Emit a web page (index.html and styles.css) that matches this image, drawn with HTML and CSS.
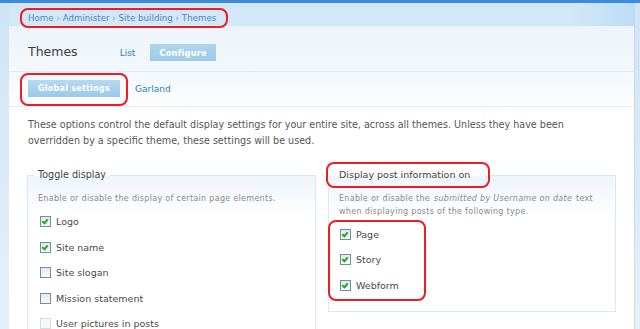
FILE: index.html
```html
<!DOCTYPE html>
<html lang="en">
<head>
    <meta charset="UTF-8">
    <title>Themes</title>
    <link rel="stylesheet" href="styles.css">
</head>
<body>
    <div class="page">
        <!-- breadcrumb -->
        <div class="crumb-bar">
            <div class="mark crumb-mark">
                <a href="#">Home</a> &rsaquo; <a href="#">Administer</a> &rsaquo; <a href="#">Site building</a> &rsaquo; <a href="#">Themes</a>
            </div>
        </div>

        <!-- title + primary tabs -->
        <div class="head">
            <h2>Themes</h2>
            <a class="tab" href="#">List</a>
            <a class="tab active" href="#">Configure</a>
        </div>

        <!-- secondary tabs -->
        <div class="subtabs">
            <div class="mark sub-mark">
                <a class="subtab active" href="#">Global settings</a>
            </div>
            <a class="subtab" href="#">Garland</a>
        </div>

        <div class="content">
            <p class="intro">These options control the default display settings for your entire site, across all themes. Unless they have been overridden by a specific theme, these settings will be used.</p>

            <div class="columns">
                <fieldset class="box">
                    <legend>Toggle display</legend>
                    <p class="desc">Enable or disable the display of certain page elements.</p>
                    <label class="check"><span class="cb on"></span>Logo</label>
                    <label class="check"><span class="cb on"></span>Site name</label>
                    <label class="check"><span class="cb"></span>Site slogan</label>
                    <label class="check"><span class="cb"></span>Mission statement</label>
                    <label class="check"><span class="cb off"></span>User pictures in posts</label>
                </fieldset>

                <fieldset class="box box-right">
                    <legend class="legend-mark">Display post information on</legend>
                    <p class="desc">Enable or disable the <em>submitted by Username on date</em> text when displaying posts of the following type.</p>
                    <div class="mark list-mark">
                        <label class="check"><span class="cb on"></span>Page</label>
                        <label class="check"><span class="cb on"></span>Story</label>
                        <label class="check"><span class="cb on"></span>Webform</label>
                    </div>
                </fieldset>
            </div>
        </div>
    </div>
</body>
</html>
```
FILE: styles.css
```css
/* page frame */
body {
    margin: 0;
    font-family: "DejaVu Sans", Verdana, sans-serif;
    background: linear-gradient(#3d8bdc 0, #3d8bdc 3px, #d0e4f5 3px, #e6f0f9 100%);
    height: 329px;
    overflow: hidden;
}

.page {
    margin: 3px 5px 0 9px;
    height: 326px;
    overflow: hidden;
    background: linear-gradient(#eef4fa 30px, #f6f9fc 80px, #ffffff 110px);
    border-right: 1px solid #c4dbef;
}

a {
    color: #2a7ac0;
    text-decoration: none;
}

/* red annotation boxes */
.mark {
    border: 2px solid #ee1c25;
    border-radius: 8px;
}

/* breadcrumb */
.crumb-bar {
    height: 24px;
    background: linear-gradient(90deg, #d2e7f7 90%, #bcdcf4 100%);
    border-bottom: 1px solid #e9f2fa;
    padding: 3px 0 0 11px;
    box-sizing: border-box;
}
.crumb-mark {
    display: inline-block;
    padding: 2px 10px 2px 6px;
    font-size: 8.7px;
    line-height: 12px;
    color: #6c9ac4;
}
.crumb-mark a {
    color: #4b8ac2;
}

/* title and tabs */
.head {
    display: flex;
    align-items: center;
    height: 44px;
    padding: 0 19px;
    border-bottom: 1px solid #e1e9f0;
}
h2 {
    margin: 0 42px 0 0;
    font-size: 12.5px;
    font-weight: normal;
    color: #3b3b3b;
    padding-top: 5px;
}
.tab {
    font-size: 9px;
    margin-right: 15px;
    padding-top: 7px;
    color: #2f7fc2;
}
.tab.active {
    background: linear-gradient(#b0d5ee, #9ccaea);
    color: #ffffff;
    font-weight: bold;
    font-size: 8.3px;
    padding: 4px 9px 3px;
    margin-top: 7px;
    letter-spacing: 0.2px;
}

.subtabs {
    display: flex;
    align-items: center;
    height: 34px;
    padding: 0 11px;
    border-bottom: 1px solid #e4ebf1;
}
.sub-mark {
    padding: 5px 6px 7px;
    margin-right: 7px;
}
.subtab {
    font-size: 9px;
    color: #2f7fc2;
}
.subtab.active {
    display: block;
    background: linear-gradient(#b6d9f0, #9bc9e8);
    color: #ffffff;
    font-weight: bold;
    font-size: 8px;
    line-height: 9px;
    padding: 4px 10px;
    letter-spacing: 0.25px;
}

/* body text */
.content {
    padding: 10px 19px 0;
}
.intro {
    margin: 0;
    font-size: 9.6px;
    line-height: 16px;
    color: #555555;
}

.columns {
    display: grid;
    grid-template-columns: 288px 287px;
    gap: 13px;
    margin-top: 13px;
    align-items: start;
}

fieldset.box {
    margin: 0 0 0 -1px;
    padding: 0 10px 10px;
    border: 1px solid #dbe8f4;
    background: linear-gradient(#eef5fb, #ffffff 40px);
    min-width: 0;
}
legend {
    margin-left: -4px;
    padding: 4px 2px;
    border: 2px solid transparent;
    border-radius: 8px;
    font-size: 9.6px;
    line-height: 14px;
    color: #444444;
}
.legend-mark {
    border-color: #ee1c25;
    margin-left: -13px;
    padding: 4px 18px 4px 11px;
    font-size: 9.5px;
}
.desc {
    margin: 4px 0 4px;
    font-size: 8px;
    line-height: 13px;
    letter-spacing: 0.3px;
    color: #8a8a8a;
}
.desc em {
    padding: 0 1px;
}

.check {
    display: flex;
    align-items: center;
    height: 25.5px;
    font-size: 9.5px;
    color: #4a4a4a;
}
.cb {
    width: 9px;
    height: 9px;
    border: 1px solid #6f8eaa;
    background: linear-gradient(#e4e8ec, #fbfbfb);
    margin: 0 5px 0 2px;
    position: relative;
}
.cb.on::after {
    content: "";
    position: absolute;
    left: 2px;
    top: 1px;
    width: 2px;
    height: 4px;
    border: solid #21a826;
    border-width: 0 2px 2px 0;
    transform: rotate(40deg);
}
.cb.off {
    border-color: #d8dcdf;
    background: #f7f7f7;
}

.list-mark {
    width: 86px;
    margin: -2px 0 0 -11px;
    padding: 0 0 1px 8px;
}
.list-mark .check {
    height: 25.3px;
}
```
